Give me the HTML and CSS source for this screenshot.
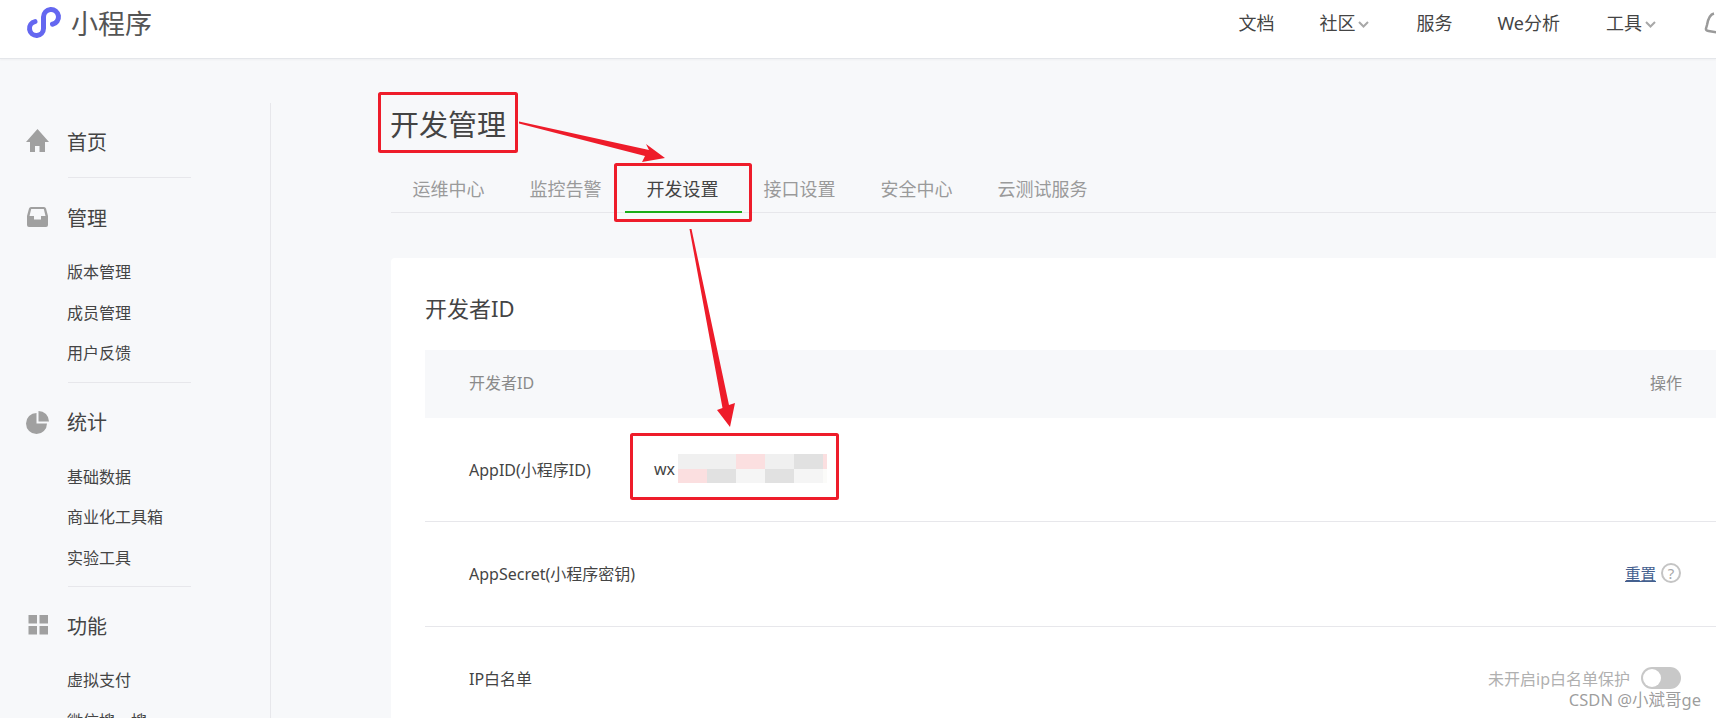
FILE: index.html
```html
<!DOCTYPE html>
<html lang="zh-CN">
<head>
  <meta charset="UTF-8">
  <title>小程序 开发管理</title>
  <link rel="stylesheet" href="styles.css">
</head>
<body>
<div class="page">
  <header class="topbar">
    <div class="brand">
      <svg class="brand-logo" width="36" height="34" viewBox="0 0 36 34">
        <path d="M9 16.600 A7 7 0 1 0 17.500 23.500 V12 A7.500 7.500 0 1 1 26.500 19.300" />
      </svg>
      <span class="brand-name">小程序</span>
    </div>
    <nav class="topnav">
      <a class="topnav-item">文档</a>
      <a class="topnav-item has-menu">社区<svg class="chev" width="11" height="7" viewBox="0 0 11 7"><path d="M1 1 L5.500 5.500 L10 1" /></svg></a>
      <a class="topnav-item">服务</a>
      <a class="topnav-item we">We分析</a>
      <a class="topnav-item has-menu">工具<svg class="chev" width="11" height="7" viewBox="0 0 11 7"><path d="M1 1 L5.500 5.500 L10 1" /></svg></a>
      <svg class="bell" width="22" height="26" viewBox="0 0 22 26"><path d="M11 3.500 C7 4.500 5 9 4 15 L3 18.500 Q2.500 20.500 5.500 21 L15 22.500" /></svg>
    </nav>
  </header>

  <div class="layout">
    <aside class="sidebar">
      <section class="menu-group">
        <div class="menu-title">
          <svg class="menu-icon" width="24" height="24" viewBox="0 0 24 24"><path d="M11.500 0 L23 13 H19 V23 H13.500 V17 H9 V23 H4 V13 H0 Z" /></svg>
          首页
        </div>
        <hr class="menu-sep first">
      </section>
      <section class="menu-group">
        <div class="menu-title">
          <svg class="menu-icon" width="24" height="24" viewBox="0 0 24 24"><path fill-rule="evenodd" d="M5 2 H18 Q19.500 2 20 3.500 L22 11 V20 Q22 22 20 22 H3 Q1 22 1 20 V11 L3 3.500 Q3.500 2 5 2 Z M5.200 4 L3.500 11 H8 V14.500 H15 V11 H19.500 L17.800 4 Z" /></svg>
          管理
        </div>
        <ul class="menu-list">
          <li>版本管理</li>
          <li>成员管理</li>
          <li>用户反馈</li>
        </ul>
        <hr class="menu-sep">
      </section>
      <section class="menu-group">
        <div class="menu-title">
          <svg class="menu-icon" width="24" height="24" viewBox="0 0 24 24"><path d="M10.500 3 V13.500 H21 A10.500 10.500 0 1 1 10.500 3 Z" /><path d="M12.500 1 A10.500 10.500 0 0 1 23 11.500 H12.500 Z" /></svg>
          统计
        </div>
        <ul class="menu-list">
          <li>基础数据</li>
          <li>商业化工具箱</li>
          <li>实验工具</li>
        </ul>
        <hr class="menu-sep">
      </section>
      <section class="menu-group">
        <div class="menu-title">
          <svg class="menu-icon" width="24" height="24" viewBox="0 0 24 24"><path d="M2.500 2 H11 V10.500 H2.500 Z M13.500 2 H22 V10.500 H13.500 Z M2.500 13 H11 V21.500 H2.500 Z M13.500 13 H22 V21.500 H13.500 Z" /></svg>
          功能
        </div>
        <ul class="menu-list">
          <li>虚拟支付</li>
          <li>微信搜一搜</li>
        </ul>
      </section>
    </aside>

    <main class="content">
      <h1 class="page-title">开发管理</h1>
      <div class="tabs">
        <a class="tab">运维中心</a>
        <a class="tab">监控告警</a>
        <a class="tab active">开发设置</a>
        <a class="tab">接口设置</a>
        <a class="tab">安全中心</a>
        <a class="tab">云测试服务</a>
      </div>

      <section class="card">
        <h2 class="card-title">开发者ID</h2>
        <div class="table-head">
          <span>开发者ID</span>
          <span>操作</span>
        </div>
        <div class="table-row">
          <span class="row-label">AppID(小程序ID)</span>
          <span class="row-value">wx<span class="mosaic">
            <i class="c1"></i><i class="c1"></i><i class="c2"></i><i class="c1"></i><i class="c3"></i><i class="c2"></i>
            <i class="c2"></i><i class="c3"></i><i class="c4"></i><i class="c3"></i><i class="c4"></i><i class="c5"></i>
          </span></span>
        </div>
        <div class="table-row">
          <span class="row-label">AppSecret(小程序密钥)</span>
          <span class="row-action">
            <a class="link">重置</a>
            <span class="help">?</span>
          </span>
        </div>
        <div class="table-row">
          <span class="row-label">IP白名单</span>
          <span class="row-action">
            <span class="muted">未开启ip白名单保护</span>
            <span class="switch"></span>
          </span>
        </div>
      </section>
    </main>
  </div>

  <!-- red markup drawn over the screenshot -->
  <svg class="markup" width="1716" height="718" viewBox="0 0 1716 718">
    <rect x="379.500" y="93.500" width="137" height="58" rx="1" />
    <rect x="615.500" y="164.500" width="135" height="56" rx="1" />
    <rect x="631.500" y="434.500" width="206" height="64" rx="1" />
    <polygon points="519,121.500 649,150 646,144 665,158 642,162 645,156 519,123.500" />
    <polygon points="689.500,229 691.500,229 729,405 735,403 730,427 717,410 722.500,408" />
  </svg>

  <div class="watermark">CSDN @小斌哥ge</div>
</div>
</body>
</html>
```

FILE: styles.css
```css
* { box-sizing: border-box; }
html, body {
  margin: 0;
  padding: 0;
  height: 100%;
  overflow: hidden;
}
body {
  font-family: "Noto Sans", "Noto Sans CJK SC", sans-serif;
  color: #444;
  background: #f7f8fa;
}
.page {
  position: relative;
  width: 1716px;
  height: 718px;
  overflow: hidden;
}

/* top bar */
.topbar {
  display: flex;
  justify-content: space-between;
  height: 59px;
  background: #fff;
  border-bottom: 1px solid #e4e6ea;
  box-shadow: 0 1px 2px rgba(0,0,0,0.04);
}
.brand {
  display: flex;
  align-items: flex-start;
  padding: 5px 0 0 26px;
}
.brand-logo path {
  fill: none;
  stroke: #6467f0;
  stroke-width: 5;
  stroke-linecap: round;
}
.brand-name {
  margin-left: 9px;
  font-size: 27px;
  line-height: 37px;
  color: #555;
}
.topnav {
  display: flex;
  align-items: flex-start;
  padding-top: 10px;
  font-size: 18px;
  line-height: 26px;
}
.topnav-item {
  display: flex;
  align-items: center;
  margin-right: 45px;
}
.topnav-item.has-menu { margin-right: 47px; }
.topnav-item.we { margin-right: 46px; }
.chev {
  margin: 3px 0 0 3px;
}
.chev path {
  fill: none;
  stroke: #a8a8a8;
  stroke-width: 2;
}
.bell {
  margin-right: -9px;
}
.bell path {
  fill: none;
  stroke: #9a9a9a;
  stroke-width: 2.500;
}

/* page body */
.layout {
  display: flex;
  height: 659px;
}
.sidebar {
  flex: 0 0 271px;
  margin-top: 44px;
  padding: 18px 0 0 26px;
  border-right: 1px solid #e7e7eb;
}
.menu-group { width: 165px; }
.menu-group:last-child { margin-top: -1px; }
.menu-title {
  display: flex;
  align-items: center;
  height: 40px;
  font-size: 20px;
}
.menu-icon {
  flex: none;
  margin-right: 17px;
  fill: #a0a0a0;
}
.menu-list {
  list-style: none;
  margin: 15px 0 0 41px;
  padding: 0;
  font-size: 16px;
  line-height: 40.500px;
}
.menu-sep {
  height: 1px;
  margin: 8px 0 19px 42px;
  border: 0;
  background: #e7e7eb;
}
.menu-sep.first { margin-top: 16px; }

/* main column */
.content {
  flex: 1;
  min-width: 0;
  padding: 46px 0 0 120px;
}
.page-title {
  margin: 0 0 0 -1px;
  font-size: 29px;
  font-weight: 400;
  line-height: 40px;
}
.tabs {
  display: flex;
  margin-top: 21px;
  border-bottom: 1px solid #e7e7eb;
}
.tab {
  height: 46px;
  padding: 0 23.500px 0 21.500px;
  font-size: 18px;
  line-height: 46px;
  color: #9a9a9a;
}
.tab.active {
  height: 47px;
  margin-bottom: -1px;
  color: #444;
  border-bottom: 2px solid #1aad19;
}

/* developer id card */
.card {
  margin-top: 45px;
  padding: 34px 0 0 34px;
  height: 480px;
  background: #fff;
  border-radius: 4px 0 0 0;
}
.card-title {
  margin: 0 0 26px;
  font-size: 22px;
  font-weight: 400;
  line-height: 32px;
}
.table-head {
  display: flex;
  justify-content: space-between;
  align-items: center;
  height: 68px;
  padding: 0 34px 4px 44px;
  background: #f7f8fa;
  font-size: 16px;
  color: #8a8a8a;
}
.table-row {
  display: flex;
  align-items: center;
  height: 105px;
  padding: 0 35px 2px 44px;
  border-bottom: 1px solid #e7e7eb;
  font-size: 16px;
}
.table-head + .table-row { height: 104px; }
.row-label { flex: 0 0 185px; }
.row-value {
  display: flex;
  align-items: center;
}
.mosaic {
  display: grid;
  grid-template-columns: repeat(5, 29px) 4px;
  grid-auto-rows: 14.500px;
  margin-left: 3px;
}
.mosaic .c1 { background: #f0f0f0; }
.mosaic .c2 { background: #fbdfe0; }
.mosaic .c3 { background: #e1e1e1; }
.mosaic .c4 { background: #f5f5f5; }
.mosaic .c5 { background: #fbfbf9; }
.row-action {
  display: flex;
  align-items: center;
  margin-left: auto;
}
.link {
  font-size: 15.500px;
  color: #44608f;
  text-decoration: underline;
}
.help {
  width: 20px;
  height: 20px;
  margin-left: 5px;
  border: 2px solid #c4c4c4;
  border-radius: 50%;
  font-size: 15px;
  line-height: 16px;
  text-align: center;
  color: #a8a8a8;
}
.muted { color: #b0b0b0; }
.switch {
  position: relative;
  width: 40px;
  height: 22px;
  margin-left: 11px;
  border-radius: 11px;
  background: #c8c8c8;
}
.switch::before {
  content: "";
  position: absolute;
  left: 2px;
  top: 2px;
  width: 18px;
  height: 18px;
  border-radius: 50%;
  background: #fff;
}

/* overlays */
.markup {
  position: absolute;
  left: 0;
  top: 0;
  pointer-events: none;
}
.markup rect {
  fill: none;
  stroke: #ee1c2a;
  stroke-width: 3;
}
.markup polygon { fill: #ee1c2a; }
.watermark {
  position: absolute;
  right: 15px;
  top: 689px;
  font-size: 16.500px;
  line-height: 22px;
  color: rgba(90,90,90,0.6);
}
```
